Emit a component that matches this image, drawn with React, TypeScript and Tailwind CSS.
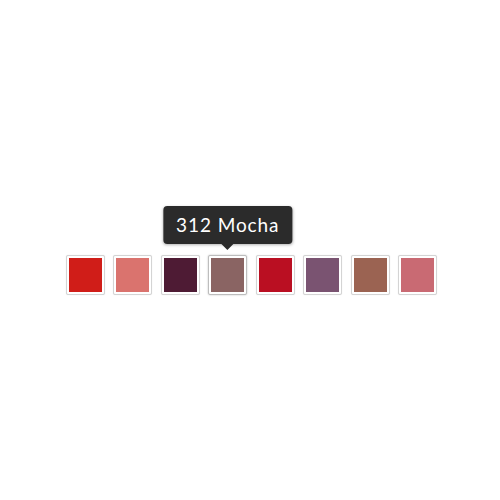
import React from 'react';

const shades = [
  { name: '301 Cherry', color: '#d01d18' },
  { name: '304 Coral', color: '#da736e' },
  { name: '308 Plum', color: '#4e1b34' },
  { name: '312 Mocha', color: '#8a6463' },
  { name: '315 Crimson', color: '#ba0f22' },
  { name: '318 Mauve', color: '#7a5371' },
  { name: '321 Cinnamon', color: '#9b6352' },
  { name: '324 Rose', color: '#c96a73' },
];

const App: React.FC = () => {
  const selected = 3;
  return (
    <div className="h-[500px] w-[500px] bg-white flex justify-center pt-[255px] pl-[3px]" style={{ fontFamily: 'Lato, "Noto Sans", sans-serif' }}>
      <div className="flex gap-[8.5px] h-[40px]">
        {shades.map((s, i) => (
          <div key={s.name} className="relative">
            <div
              className={`w-[39px] h-[40px] bg-white rounded-[2px] p-[2px] border ${
                i === selected ? 'border-[#bdbdbd] shadow-[0_0_2px_rgba(0,0,0,0.25)]' : 'border-[#d4d4d4] shadow-[0_0_1px_rgba(0,0,0,0.15)]'
              }`}
            >
              <div className="w-full h-full" style={{ backgroundColor: s.color }} />
            </div>
            {i === selected && (
              <div className="absolute bottom-[45px] left-1/2 -translate-x-1/2 flex flex-col items-center">
                <div className="bg-[#2b2b2b] text-white rounded-[4px] px-[13px] h-[38px] flex items-center whitespace-nowrap text-[19px] tracking-[0.9px] shadow-[0_1px_3px_rgba(0,0,0,0.3)]">
                  {s.name}
                </div>
                <div className="w-0 h-0 border-l-[6px] border-r-[6px] border-t-[6px] border-l-transparent border-r-transparent border-t-[#2b2b2b]" />
              </div>
            )}
          </div>
        ))}
      </div>
    </div>
  );
};

export default App;
